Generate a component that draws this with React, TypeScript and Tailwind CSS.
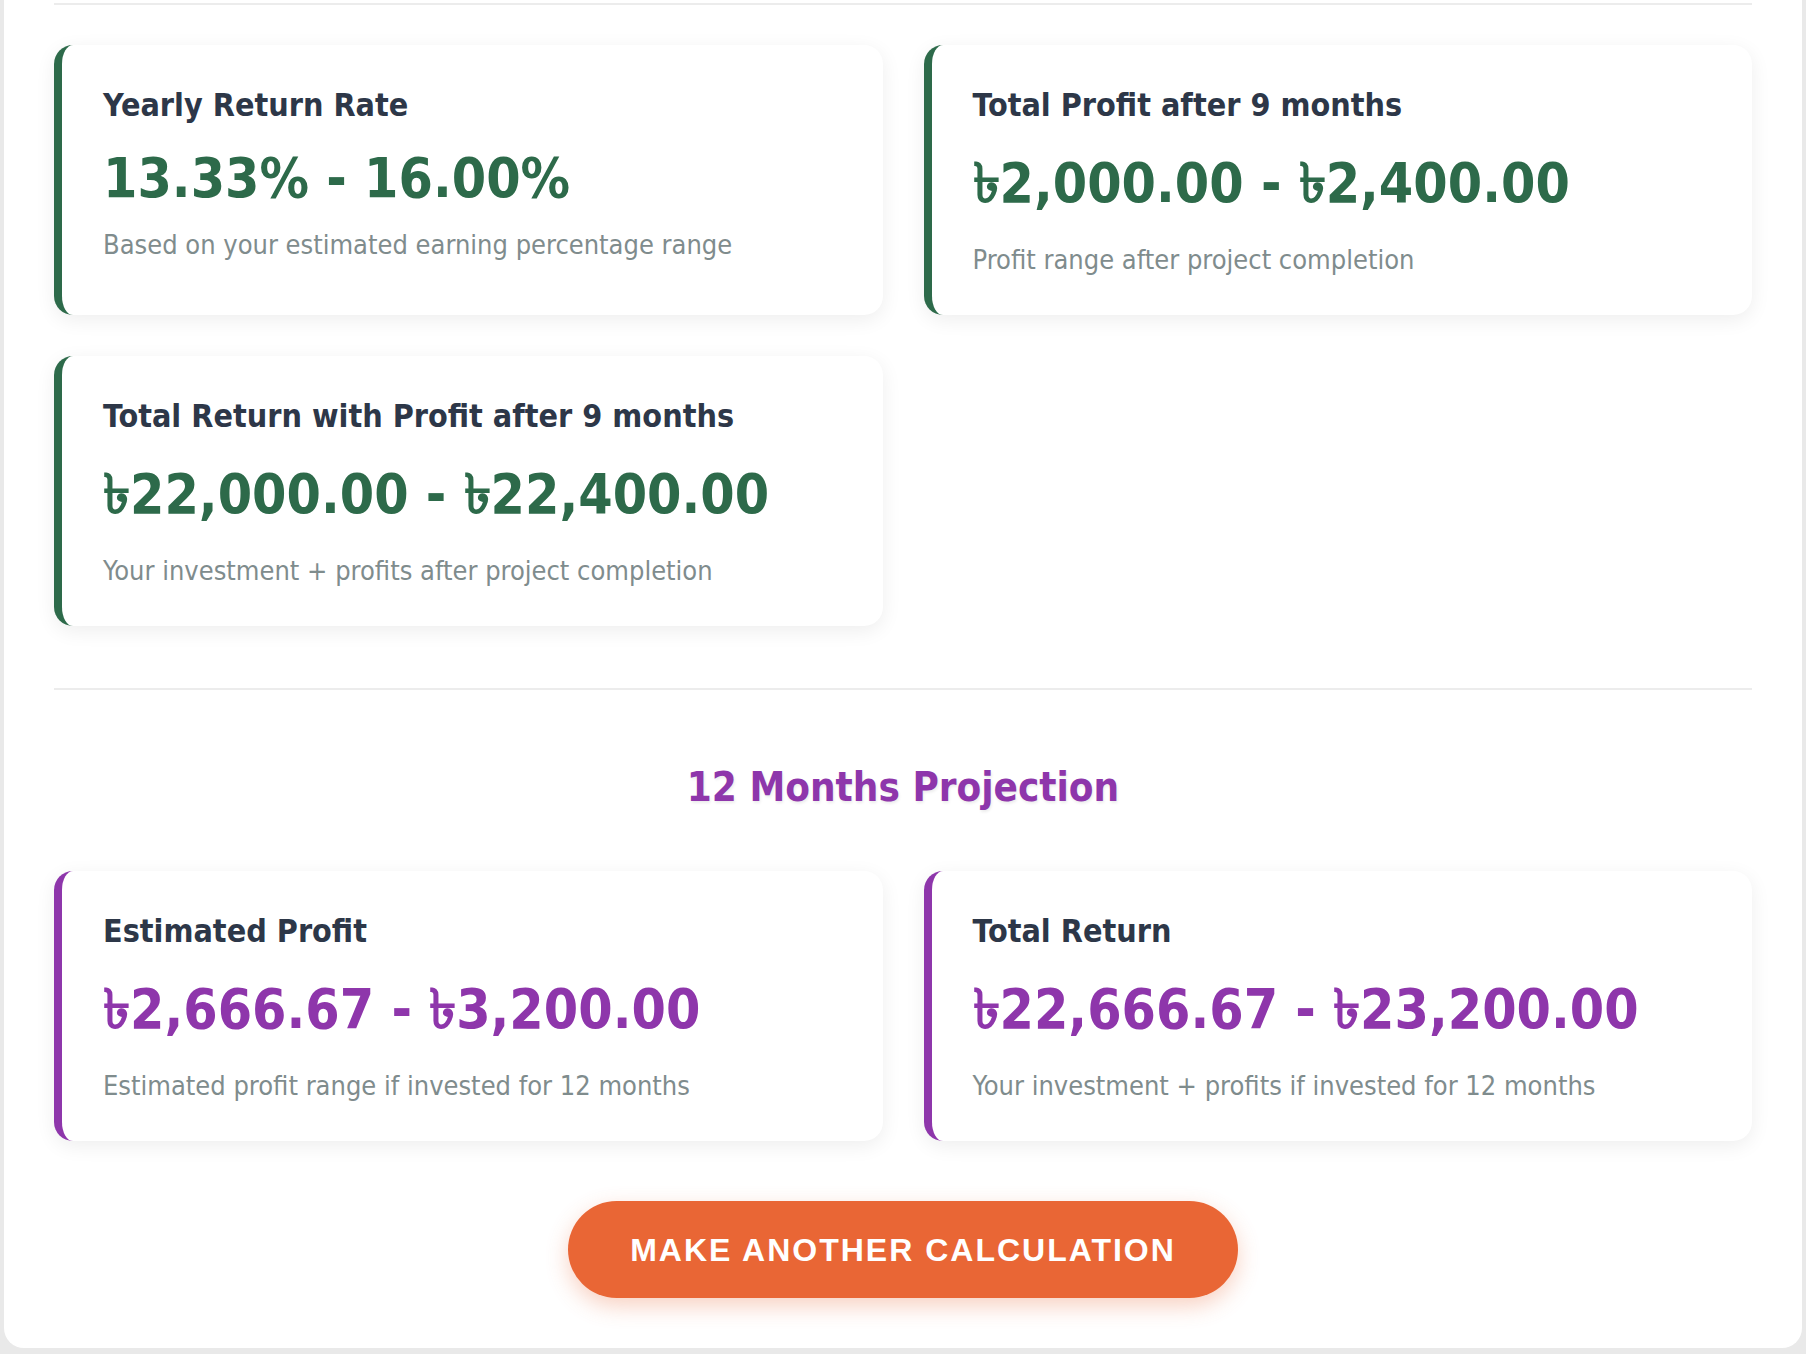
const nineMonths = [
  {
    title: 'Yearly Return Rate',
    value: '13.33% - 16.00%',
    note: 'Based on your estimated earning percentage range',
    taka: false,
  },
  {
    title: 'Total Profit after 9 months',
    value: '৳2,000.00 - ৳2,400.00',
    note: 'Profit range after project completion',
    taka: true,
  },
  {
    title: 'Total Return with Profit after 9 months',
    value: '৳22,000.00 - ৳22,400.00',
    note: 'Your investment + profits after project completion',
    taka: true,
  },
];

const twelveMonths = [
  {
    title: 'Estimated Profit',
    value: '৳2,666.67 - ৳3,200.00',
    note: 'Estimated profit range if invested for 12 months',
    taka: true,
  },
  {
    title: 'Total Return',
    value: '৳22,666.67 - ৳23,200.00',
    note: 'Your investment + profits if invested for 12 months',
    taka: true,
  },
];

type Item = { title: string; value: string; note: string; taka: boolean };

function ResultCard({ item, purple }: { item: Item; purple?: boolean }) {
  return (
    <div
      className={
        'bg-white rounded-[19px] border-l-8 pl-[41px] pr-10 pt-[42px] pb-10 shadow-[0_5px_20px_rgba(0,0,0,0.07)] ' +
        (purple ? 'border-[#8e36ab]' : 'border-[#2d6a4a]')
      }
    >
      <h3 className="text-[32px] leading-[36px] font-bold text-[#2d3748]">{item.title}</h3>
      <p
        className={
          'mt-[23px] text-[55px] font-bold ' +
          (item.taka ? 'leading-[74px] ' : 'leading-[64px] ') +
          (purple ? 'text-[#8e36ab]' : 'text-[#2d6a4a]')
        }
      >
        {item.value}
      </p>
      <p className={(item.taka ? 'mt-[25px] ' : 'mt-[20px] ') + 'text-[27px] leading-[30px] text-[#7f8c8d]'}>
        {item.note}
      </p>
    </div>
  );
}

export default function App() {
  return (
    <div className="h-[1354px] overflow-hidden bg-[#e9e9e9] px-1 font-['DejaVu_Sans_Condensed','DejaVu_Sans',sans-serif]">
      <div className="bg-white rounded-b-[20px] px-[50px] pt-[3px] pb-[50px]">
        <div className="h-[2px] bg-[#ececec]" />

        {/* 9 months results */}
        <div className="mt-10 grid grid-cols-2 gap-[41px]">
          {nineMonths.map((item, i) => (
            <ResultCard key={i} item={item} />
          ))}
        </div>

        <div className="mt-[62px] h-[2px] bg-[#ececec]" />

        <h2 className="mt-[73px] text-center text-[40px] leading-[48px] font-bold text-[#8e36ab] [text-shadow:1px_2px_3px_rgba(0,0,0,0.08)]">
          12 Months Projection
        </h2>

        {/* 12 months results */}
        <div className="mt-[60px] grid grid-cols-2 gap-[41px]">
          {twelveMonths.map((item, i) => (
            <ResultCard key={i} item={item} purple />
          ))}
        </div>

        <div className="mt-[60px] flex justify-center">
          <button className="h-[97px] rounded-full bg-[#e96635] px-[62px] font-['Liberation_Sans',Arial,sans-serif] text-[32px] font-bold uppercase tracking-[2px] text-white shadow-[0_8px_22px_rgba(233,102,53,0.3)]">
            Make Another Calculation
          </button>
        </div>
      </div>
    </div>
  );
}
